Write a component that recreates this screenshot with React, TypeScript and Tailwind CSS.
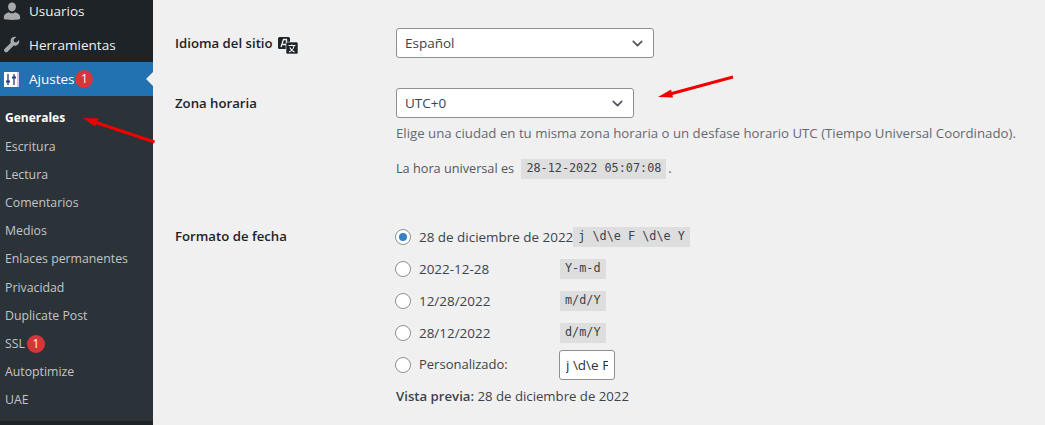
import { ChevronDown } from 'lucide-react';

const subItems = ['Escritura', 'Lectura', 'Comentarios', 'Medios', 'Enlaces permanentes', 'Privacidad', 'Duplicate Post'];

const dateRows = [
  { label: '28 de diciembre de 2022', code: 'j \\d\\e F \\d\\e Y', checked: true },
  { label: '2022-12-28', code: 'Y-m-d', checked: false },
  { label: '12/28/2022', code: 'm/d/Y', checked: false },
  { label: '28/12/2022', code: 'd/m/Y', checked: false },
];

function Badge() {
  return (
    <span className="flex h-[18px] w-[18px] items-center justify-center rounded-full bg-[#d63638] text-[12px] leading-none text-white">1</span>
  );
}

function Radio({ checked }: { checked?: boolean }) {
  return (
    <span className="mr-[8px] flex h-[16px] w-[16px] shrink-0 items-center justify-center rounded-full border border-[#8c8f94] bg-white">
      {checked && <span className="h-[8px] w-[8px] rounded-full bg-[#3582c4]" />}
    </span>
  );
}

function Code({ children }: { children: string }) {
  return (
    <code className="flex h-[20px] items-center whitespace-pre bg-[#dedede] px-[5px] font-['DejaVu_Sans_Mono',monospace] text-[11.8px] text-[#3c434a]">
      {children}
    </code>
  );
}

function FakeSelect({ value, width }: { value: string; width: string }) {
  return (
    <div className={`flex h-[30px] items-center justify-between rounded-[3px] border border-[#8c8f94] bg-white pl-[8px] pr-[7px] text-[13.5px] text-[#3c434a] ${width}`}>
      <span>{value}</span>
      <ChevronDown size={17} strokeWidth={2.4} className="text-[#50575e]" />
    </div>
  );
}

export default function App() {
  return (
    <div className="relative flex h-[425px] w-[1045px] overflow-hidden bg-[#f0f0f1] font-['Open_Sans',sans-serif] text-[13px] text-[#3c434a]">
      <aside className="flex w-[153px] shrink-0 flex-col bg-[#1d2327] text-[#f0f0f1]">
        <div className="-mt-[6px] flex h-[34px] items-center gap-[8px] pl-[3px] text-[13.5px]">
          <svg width="18" height="18" viewBox="0 0 20 20" fill="#a7aaad">
            <path d="M10 .5c2.6 0 4.4 2.1 4.4 4.8S12.6 10.500 10 10.500 5.600 8 5.600 5.300 7.400.5 10 .5zM1 16.500c0-2.800 2.800-4.200 5.600-5.200 1 .9 2.100 1.300 3.400 1.300s2.400-.4 3.400-1.300c2.800 1 5.600 2.400 5.600 5.200v2.400c-2.200.7-5.600 1-9 1s-6.800-.3-9-1v-2.400z" />
          </svg>
          <span>Usuarios</span>
        </div>
        <div className="flex h-[34px] items-center gap-[8px] pl-[3px] text-[13.5px]">
          <svg width="18" height="18" viewBox="0 0 20 20" fill="#a7aaad">
            <path d="M16.700 9.300c1.300-1.300 1.700-3.200 1.100-4.900l-2.900 2.900-2.600-.6-.6-2.600 2.900-2.900c-1.700-.6-3.600-.2-4.900 1.100-1.400 1.400-1.700 3.400-1 5.100l-6.800 6.800c-.9.9-.9 2.300 0 3.200.9.9 2.300.9 3.200 0l6.800-6.800c1.700.7 3.600.3 4.800-1.300z" />
          </svg>
          <span>Herramientas</span>
        </div>
        <div className="relative flex h-[34px] items-center bg-[#2271b1] pl-[4px] text-[13.5px] text-white">
          <svg width="15" height="15" viewBox="0 0 15 15" className="mr-[10px]">
            <rect width="15" height="15" fill="#fff" />
            <path d="M4 2v11M10 2v11" stroke="#2c3e7a" strokeWidth="1.3" />
            <path d="M2 9.500h4M8 5.500h4" stroke="#2c3e7a" strokeWidth="2" />
            <path d="M14 0v15" stroke="#a98fd0" strokeWidth="1" />
          </svg>
          <span>Ajustes</span>
          <span className="ml-[1px]"><Badge /></span>
          <span className="absolute right-0 top-[10px] h-0 w-0 border-y-[7px] border-r-[7px] border-y-transparent border-r-[#f0f0f1]" />
        </div>
        <ul className="flex h-[325px] flex-col bg-[#2c3338] pl-[5px] pt-[7px] text-[12.3px] text-[#c3c4c7]">
          <li className="flex h-[29.7px] items-center text-[12px] font-bold text-white">Generales</li>
          {subItems.map((item) => (
            <li key={item} className="flex h-[28.2px] items-center whitespace-nowrap">{item}</li>
          ))}
          <li className="flex h-[28.2px] items-center gap-[2px]">SSL <Badge /></li>
          <li className="flex h-[28.2px] items-center">Autoptimize</li>
          <li className="flex h-[28.2px] items-center">UAE</li>
        </ul>
      </aside>

      <main className="flex-1 pl-[22px] pt-[28px]">
        <div className="flex">
          <div className="flex h-[32px] w-[221px] items-center gap-[5px] text-[13.2px] font-semibold text-[#1d2327]">
            Idioma del sitio
            <svg width="20" height="17" viewBox="0 0 20 17" className="mt-[3px]">
              <rect x="0" y="0" width="12" height="12" rx="1.500" fill="#1d2327" />
              <path d="M3 10L5.500 2.500h3V10M4.200 7.500h4.300" stroke="#f0f0f1" strokeWidth="1.300" fill="none" />
              <rect x="8" y="5" width="12" height="12" rx="1.500" fill="#1d2327" stroke="#f0f0f1" strokeWidth="0.600" />
              <path d="M10.500 8.500h7M14 7.500v1M11 15c2.600-1 4.600-3.200 5-6.500M11.800 10.500c.8 2 2.400 3.600 4.800 4.500" stroke="#f0f0f1" strokeWidth="1.100" fill="none" />
            </svg>
          </div>
          <FakeSelect value="Español" width="w-[258px]" />
        </div>

        <div className="mt-[28px] flex">
          <div className="flex h-[32px] w-[221px] items-center text-[13.2px] font-semibold text-[#1d2327]">Zona horaria</div>
          <div>
            <FakeSelect value="UTC+0" width="w-[238px]" />
            <p className="mt-[5px] whitespace-nowrap text-[13.24px] leading-[20px] text-[#646970]">
              Elige una ciudad en tu misma zona horaria o un desfase horario UTC (Tiempo Universal Coordinado).
            </p>
            <div className="mt-[16px] flex h-[20px] items-center whitespace-pre text-[12.7px] text-[#50575e]">
              La hora universal es <span className="ml-[4px]"><Code>28-12-2022 05:07:08</Code></span><span className="ml-[2px]">.</span>
            </div>
          </div>
        </div>

        <div className="mt-[47px] flex">
          <div className="w-[221px] text-[13.2px] font-semibold leading-[20px] text-[#1d2327]">Formato de fecha</div>
          <div className="-ml-[1px] -mt-[5px] flex flex-col">
            {dateRows.map((row) => (
              <div key={row.code} className="flex h-[32px] items-center">
                <Radio checked={row.checked} />
                <span className={`whitespace-nowrap text-[13.45px] ${row.checked ? '' : 'w-[141px]'}`}>{row.label}</span>
                <Code>{row.code}</Code>
              </div>
            ))}
            <div className="flex h-[32px] items-center">
              <Radio />
              <span className="w-[140px]">Personalizado:</span>
              <input
                readOnly
                value="j \d\e F \d\e Y"
                className="h-[30px] w-[56px] rounded-[3px] border border-[#8c8f94] bg-white px-[6px] text-[13.5px] text-[#2c3338]"
              />
            </div>
            <p className="ml-[1px] mt-[5px] text-[13.2px] leading-[20px]"><strong className="font-semibold">Vista previa:</strong> 28 de diciembre de 2022</p>
          </div>
        </div>
      </main>

      {/* red arrows drawn over the screenshot */}
      <svg className="absolute left-0 top-0" width="1045" height="425" fill="none">
        <path d="M154.500 142L96 122.500" stroke="#f00000" strokeWidth="3" />
        <path d="M83 118L98.500 118.500L95 126.500z" fill="#f00000" />
        <path d="M733 77L670 94" stroke="#f00000" strokeWidth="3" />
        <path d="M658 97L671 89.500L673 97.500z" fill="#f00000" />
      </svg>
    </div>
  );
}
